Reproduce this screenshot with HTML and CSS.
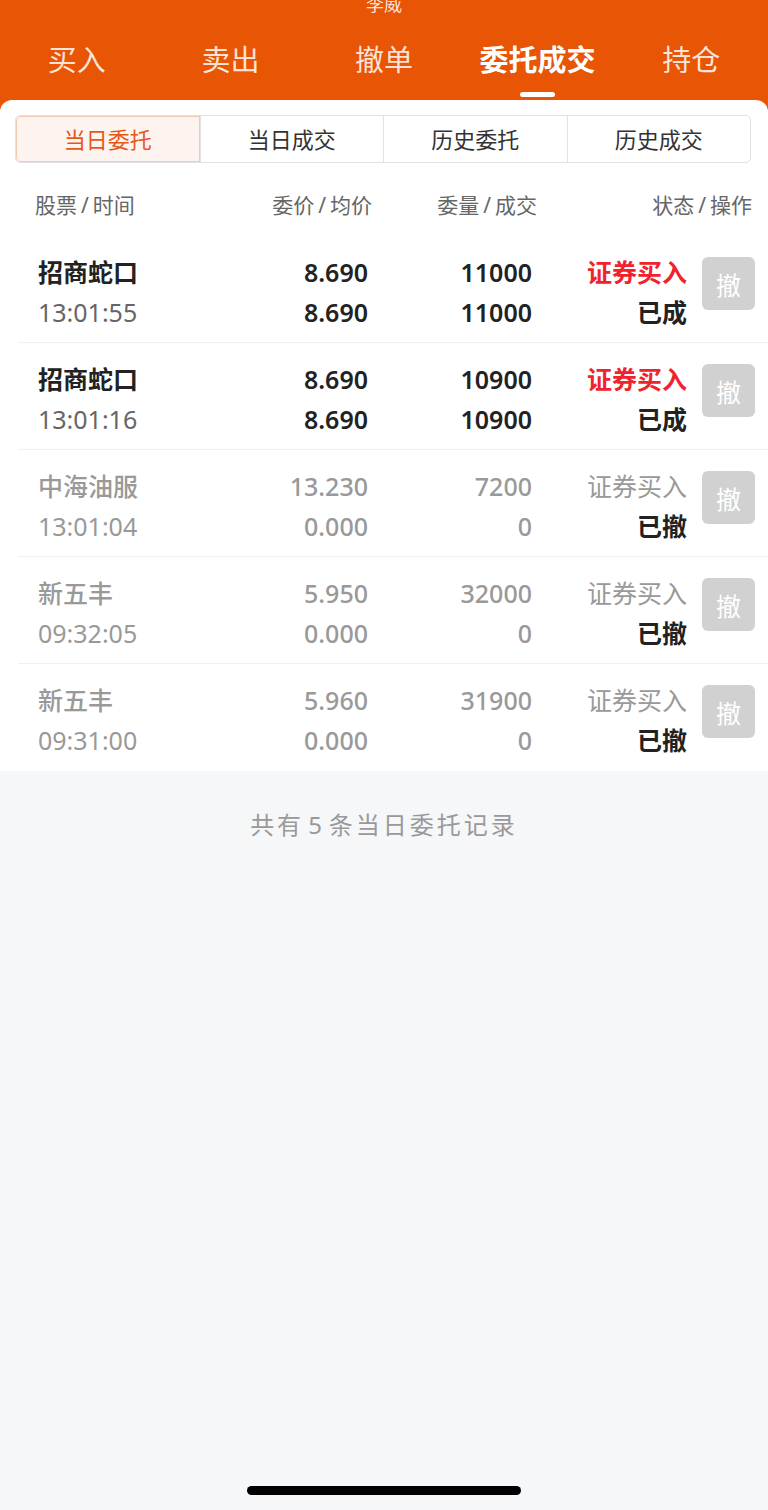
FILE: index.html
```html
<!DOCTYPE html>
<html lang="zh-CN">
<head>
    <meta charset="UTF-8">
    <meta name="viewport" content="width=device-width, initial-scale=1.0">
    <title>委托成交</title>
    <link rel="stylesheet" href="styles.css">
</head>
<body>
    <div class="sheet">
        <div class="header">
            <div class="title">李威</div>
            <div class="tabs">
                <div class="tab">买入</div>
                <div class="tab">卖出</div>
                <div class="tab">撤单</div>
                <div class="tab active">委托成交</div>
                <div class="tab">持仓</div>
            </div>
        </div>
        <div class="panel">
            <div class="seg">
                <div class="seg-item active">当日委托</div>
                <div class="seg-item">当日成交</div>
                <div class="seg-item">历史委托</div>
                <div class="seg-item">历史成交</div>
            </div>
            <div class="thead">
                <span>股票<i class="sl">/</i>时间</span>
                <span class="r">委价<i class="sl">/</i>均价</span>
                <span class="r">委量<i class="sl">/</i>成交</span>
                <span class="r">状态<i class="sl">/</i>操作</span>
            </div>
            <div class="list">
                <div class="row live">
                    <div class="cell"><b>招商蛇口</b><span class="time">13:01:55</span></div>
                    <div class="cell r"><b>8.690</b><b>8.690</b></div>
                    <div class="cell r"><b>11000</b><b>11000</b></div>
                    <div class="cell r"><b class="buy">证券买入</b><b class="st">已成</b></div>
                    <button class="cancel">撤</button>
                </div>
                <div class="row live">
                    <div class="cell"><b>招商蛇口</b><span class="time">13:01:16</span></div>
                    <div class="cell r"><b>8.690</b><b>8.690</b></div>
                    <div class="cell r"><b>10900</b><b>10900</b></div>
                    <div class="cell r"><b class="buy">证券买入</b><b class="st">已成</b></div>
                    <button class="cancel">撤</button>
                </div>
                <div class="row dead">
                    <div class="cell"><b>中海油服</b><span class="time">13:01:04</span></div>
                    <div class="cell r"><b>13.230</b><b>0.000</b></div>
                    <div class="cell r"><b>7200</b><b>0</b></div>
                    <div class="cell r"><b class="buy">证券买入</b><b class="st">已撤</b></div>
                    <button class="cancel">撤</button>
                </div>
                <div class="row dead">
                    <div class="cell"><b>新五丰</b><span class="time">09:32:05</span></div>
                    <div class="cell r"><b>5.950</b><b>0.000</b></div>
                    <div class="cell r"><b>32000</b><b>0</b></div>
                    <div class="cell r"><b class="buy">证券买入</b><b class="st">已撤</b></div>
                    <button class="cancel">撤</button>
                </div>
                <div class="row dead">
                    <div class="cell"><b>新五丰</b><span class="time">09:31:00</span></div>
                    <div class="cell r"><b>5.960</b><b>0.000</b></div>
                    <div class="cell r"><b>31900</b><b>0</b></div>
                    <div class="cell r"><b class="buy">证券买入</b><b class="st">已撤</b></div>
                    <button class="cancel">撤</button>
                </div>
            </div>
        </div>
    </div>
    <div class="footer">共有<span class="num">5</span>条当日委托记录</div>
    <div class="home-bar"></div>
</body>
</html>
```

FILE: styles.css
```css
* {
    box-sizing: border-box;
    margin: 0;
    padding: 0;
}
html, body {
    background: #f6f7f9;
}
body {
    font-family: "Noto Sans", "Noto Sans CJK SC", sans-serif;
    min-height: 1510px;
}
.sheet {
    background: #e85504;
}
.header {
    height: 100px;
    color: #fff;
}
.title {
    height: 18px;
    line-height: 8px;
    font-size: 18px;
    text-align: center;
    overflow: hidden;
    color: rgba(255, 255, 255, .85);
}
.tabs {
    display: grid;
    grid-template-columns: repeat(5, 1fr);
    padding-top: 22px;
}
.tab {
    text-align: center;
    font-size: 29px;
    line-height: 40px;
    color: rgba(255, 255, 255, .85);
    display: flex;
    flex-direction: column;
    align-items: center;
}
.tab.active {
    color: #fff;
    font-weight: 700;
}
.tab.active::after {
    content: '';
    width: 35px;
    height: 5px;
    border-radius: 3px;
    background: #fff;
    margin-top: 12px;
}
.panel {
    background: #fff;
    border-radius: 12px 12px 0 0;
    padding-top: 15px;
}
.seg {
    margin: 0 17px 0 15px;
    display: grid;
    grid-template-columns: repeat(4, 1fr);
    height: 48px;
    border: 1px solid #e2e2e6;
    border-radius: 5px;
    overflow: hidden;
}
.seg-item {
    text-align: center;
    line-height: 46px;
    font-size: 22px;
    color: #333;
    border-left: 1px solid #e2e2e6;
}
.seg-item:first-child {
    border-left: none;
}
.seg-item.active {
    background: #fdf4f0;
    color: #e8561a;
    box-shadow: inset 0 0 0 1px #f2c9b5;
    border-radius: 5px 0 0 5px;
}
.thead {
    display: grid;
    grid-template-columns: 170px 167px 165px 215px;
    padding: 22px 0 11px 35px;
    font-size: 21px;
    line-height: 40px;
    color: #666;
}
.sl {
    font-style: normal;
    margin: 0 4px;
}
.r {
    text-align: right;
}
.list {
    margin-left: 18px;
}
.row {
    display: grid;
    grid-template-columns: 170px 160px 164px 155px 15px 53px;
    padding: 16px 0 10px 20px;
    border-bottom: 1px solid #f0f0f0;
    font-size: 25px;
    line-height: 40px;
}
.row:last-child {
    border-bottom: none;
    padding-bottom: 11px;
}
.cell {
    display: flex;
    flex-direction: column;
}
.cell b {
    display: block;
}
.cell.r b {
    text-align: right;
}
.live b {
    color: #222;
    font-weight: 600;
}
.time {
    color: #666;
}
.live .buy {
    color: #f0232c;
}
.dead b {
    color: #999;
    font-weight: 500;
}
.dead .time {
    color: #999;
}
.dead .buy {
    font-weight: 400;
}
.row .st {
    color: #222;
    font-weight: 600;
}
.cancel {
    grid-column: 6;
    margin-top: 5px;
    width: 53px;
    height: 53px;
    border: none;
    border-radius: 6px;
    background: #d1d1d1;
    color: #fff;
    font-family: inherit;
    font-size: 25px;
    align-self: start;
}
.footer {
    text-align: center;
    padding-top: 36px;
    line-height: 36px;
    font-size: 24px;
    letter-spacing: 3px;
    color: #999;
}
.footer .num {
    margin: 0 4px;
}
.home-bar {
    position: fixed;
    left: 247px;
    top: 1486px;
    width: 274px;
    height: 9px;
    border-radius: 5px;
    background: #000;
}
```
